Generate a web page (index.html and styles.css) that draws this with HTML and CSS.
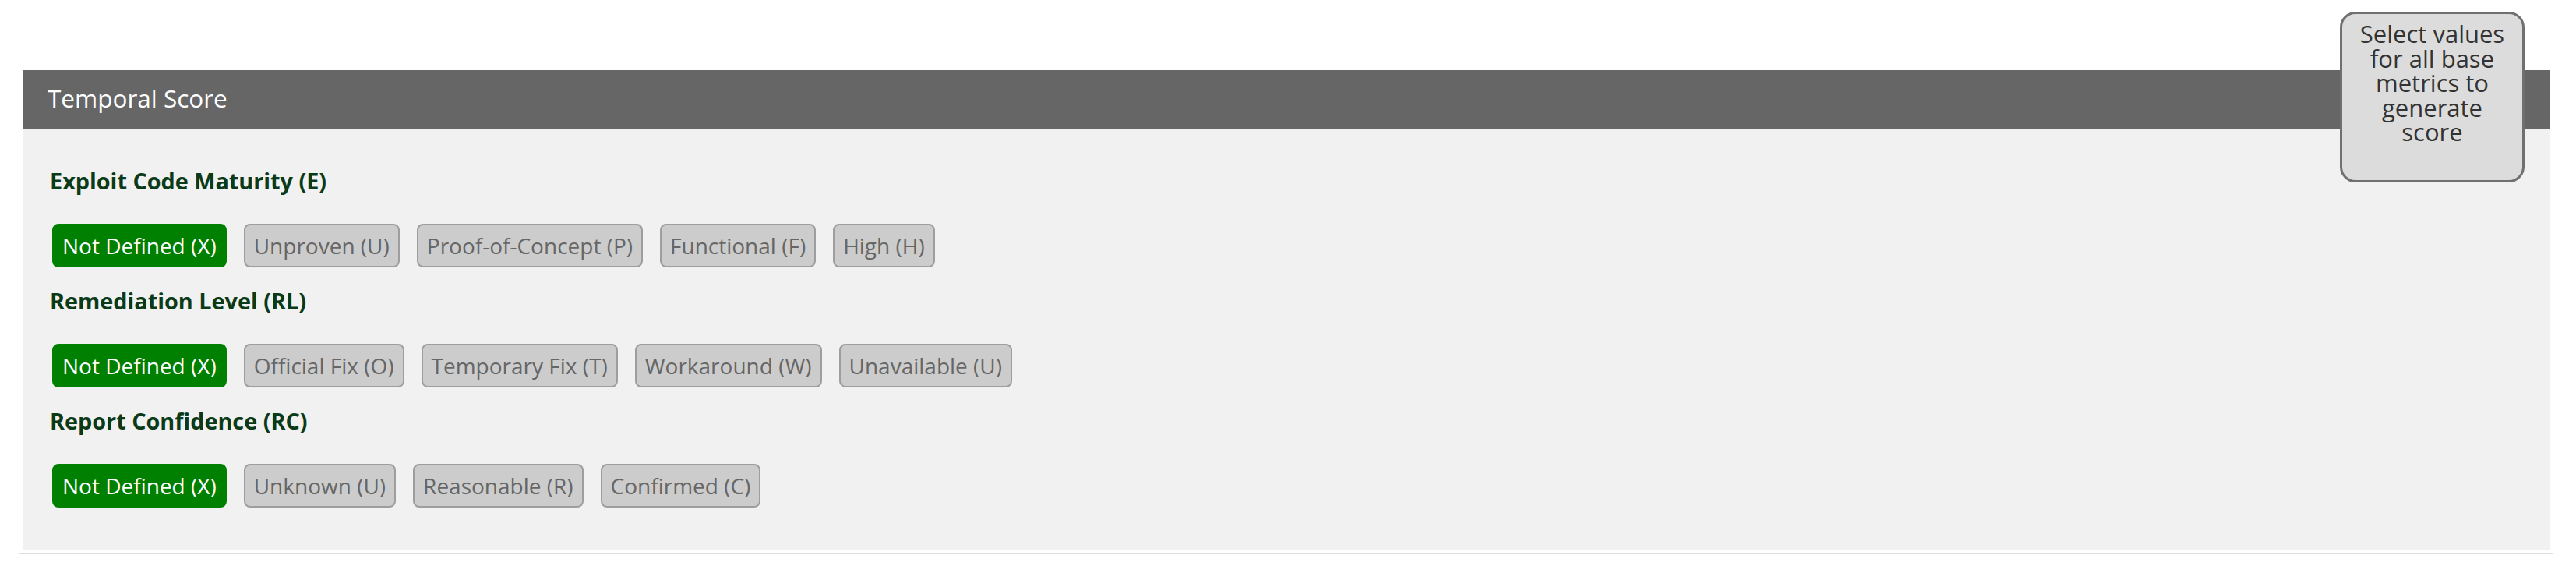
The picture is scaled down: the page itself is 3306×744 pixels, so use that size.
FILE: index.html
```html
<!DOCTYPE html>
<html lang="en">
<head>
<meta charset="utf-8">
<title>Temporal Score</title>
<link rel="stylesheet" href="styles.css">
</head>
<body>
<div class="page">
  <section class="panel-wrap">
    <div class="panel">
      <div class="panel-head">Temporal Score</div>
      <div class="panel-body">
        <div class="metric">
          <h3 class="metric-title">Exploit Code Maturity (E)</h3>
          <div class="btn-row">
            <button class="btn btn-on">Not Defined (X)</button>
            <button class="btn">Unproven (U)</button>
            <button class="btn">Proof-of-Concept (P)</button>
            <button class="btn">Functional (F)</button>
            <button class="btn">High (H)</button>
          </div>
        </div>
        <div class="metric">
          <h3 class="metric-title">Remediation Level (RL)</h3>
          <div class="btn-row">
            <button class="btn btn-on">Not Defined (X)</button>
            <button class="btn">Official Fix (O)</button>
            <button class="btn">Temporary Fix (T)</button>
            <button class="btn">Workaround (W)</button>
            <button class="btn">Unavailable (U)</button>
          </div>
        </div>
        <div class="metric">
          <h3 class="metric-title">Report Confidence (RC)</h3>
          <div class="btn-row">
            <button class="btn btn-on">Not Defined (X)</button>
            <button class="btn">Unknown (U)</button>
            <button class="btn">Reasonable (R)</button>
            <button class="btn">Confirmed (C)</button>
          </div>
        </div>
      </div>
    </div>
  </section>
  <div class="score-tip">Select values for all base metrics to generate score</div>
</div>
</body>
</html>
```

FILE: styles.css
```css
html, body {
  margin: 0;
  padding: 0;
  background: #ffffff;
}

body {
  font-family: "Open Sans", "Noto Sans", "Liberation Sans", sans-serif;
}

.page {
  position: relative;
  padding-top: 90px;
}

.panel-wrap {
  margin-left: 25px;
  width: 3251px;
  box-sizing: border-box;
  padding: 0 4px 3px 4px;
  border-bottom: 2px solid #dedede;
}

.panel {
  background: #f1f1f1;
}

.panel-head {
  background: #666666;
  color: #ffffff;
  font-size: 31.5px;
  line-height: 43px;
  height: 75px;
  box-sizing: border-box;
  padding: 14px 0 18px 32px;
}

.panel-body {
  padding: 24px 0 55px 35px;
}

.metric-title {
  margin: 22px 0 0 0;
  font-size: 28.8px;
  line-height: 42px;
  font-weight: 700;
  color: #0a3a17;
}

.btn-row {
  display: flex;
  gap: 22px;
  margin: 34px 0 0 3px;
}

.btn {
  font-family: "Open Sans", "Noto Sans", "Liberation Sans", sans-serif;
  font-size: 28px;
  line-height: 42px;
  height: 56px;
  box-sizing: border-box;
  padding: 5px 11px;
  border: 2px solid #9e9e9e;
  border-radius: 8px;
  background: #cccccc;
  color: #666666;
  cursor: pointer;
}

.btn-on {
  background: #008000;
  border-color: #008000;
  color: #ffffff;
}

.score-tip {
  position: absolute;
  left: 3003px;
  top: 15px;
  width: 237px;
  height: 219px;
  box-sizing: border-box;
  padding: 10px 14px 0 14px;
  border: 3px solid #707070;
  border-radius: 20px;
  background: #dcdcdc;
  color: #333333;
  font-size: 31px;
  line-height: 31.5px;
  text-align: center;
}
```
